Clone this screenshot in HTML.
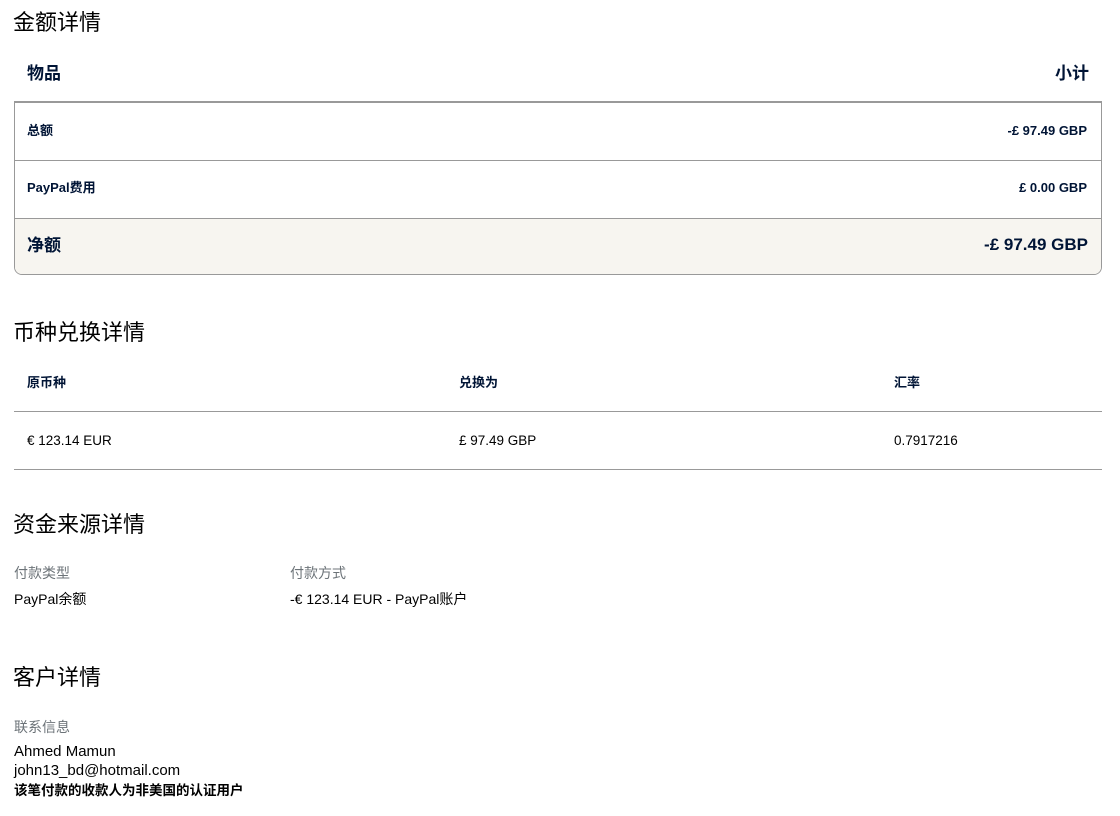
<!DOCTYPE html>
<html><head><meta charset="utf-8"><style>
*{margin:0;padding:0;box-sizing:border-box}
body{width:1120px;height:816px;background:#fff;font-family:"Liberation Sans","Noto Sans CJK SC",sans-serif;color:#001435;position:relative;overflow:hidden}
.a{position:absolute;white-space:nowrap;line-height:16px}
h2{position:absolute;font-weight:normal;font-size:22px;color:#000;left:13px;line-height:26px}
.hr{position:absolute;left:14px;width:1088px;height:1px;background:#999}
.s{font-size:13px;font-weight:bold}
.n{font-size:14px;color:#000}
.g{font-size:14px;color:#6c7378}
</style></head><body>
<h2 style="top:10px">金额详情</h2>
<div class="a" style="left:27px;top:64px;font-size:17px;font-weight:bold;line-height:20px">物品</div>
<div class="a" style="right:31px;top:64px;font-size:17px;font-weight:bold;line-height:20px">小计</div>
<div style="position:absolute;left:14px;top:101px;width:1088px;height:174px;border:1px solid #999;border-top:2px solid #999;border-radius:0 0 8px 8px;overflow:hidden">
 <div style="position:absolute;left:0;top:115px;width:100%;height:58px;background:#f7f5f0;border-top:1px solid #999"></div>
 <div style="position:absolute;left:0;top:57px;width:100%;height:1px;background:#999"></div>
</div>
<div class="a s" style="left:27px;top:123px">总额</div>
<div class="a s" style="right:33px;top:123px">-£ 97.49 GBP</div>
<div class="a s" style="left:27px;top:180px">PayPal费用</div>
<div class="a s" style="right:33px;top:180px">£ 0.00 GBP</div>
<div class="a" style="left:27px;top:236px;font-size:17px;font-weight:bold;line-height:20px">净额</div>
<div class="a" style="right:32px;top:235px;font-size:17px;font-weight:bold;line-height:20px">-£ 97.49 GBP</div>

<h2 style="top:320px">币种兑换详情</h2>
<div class="a s" style="left:27px;top:375px">原币种</div>
<div class="a s" style="left:459px;top:375px">兑换为</div>
<div class="a s" style="left:894px;top:375px">汇率</div>
<div class="hr" style="top:411px"></div>
<div class="a n" style="left:27px;top:433px;font-size:13.5px">€ 123.14 EUR</div>
<div class="a n" style="left:459px;top:433px;font-size:13.5px">£ 97.49 GBP</div>
<div class="a n" style="left:894px;top:433px;font-size:13.5px">0.7917216</div>
<div class="hr" style="top:469px"></div>

<h2 style="top:512px">资金来源详情</h2>
<div class="a g" style="left:14px;top:565px">付款类型</div>
<div class="a g" style="left:290px;top:565px">付款方式</div>
<div class="a n" style="left:14px;top:591px">PayPal余额</div>
<div class="a n" style="left:290px;top:591px">-€ 123.14 EUR - PayPal账户</div>

<h2 style="top:665px">客户详情</h2>
<div class="a g" style="left:14px;top:719px">联系信息</div>
<div class="a n" style="left:14px;top:744px;font-size:15px">Ahmed Mamun</div>
<div class="a n" style="left:14px;top:763px;font-size:15px">john13_bd@hotmail.com</div>
<div class="a n" style="left:14px;top:783px;font-weight:bold;font-size:13.5px">该笔付款的收款人为非美国的认证用户</div>
</body></html>
